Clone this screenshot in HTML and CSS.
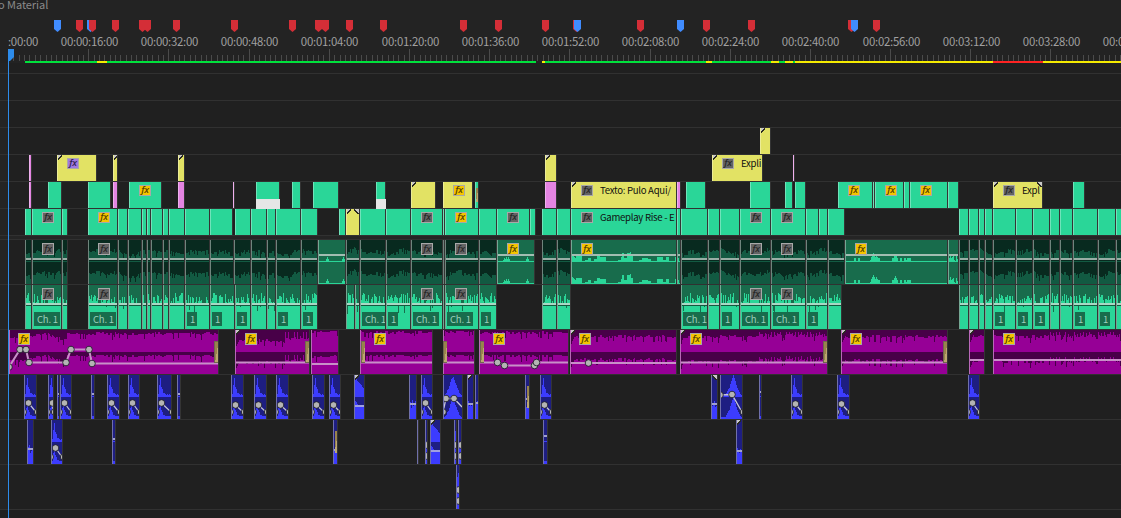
FILE: index.html
```
<!DOCTYPE html>
<html lang="en">
<head>
    <meta charset="UTF-8">
    <meta name="viewport" content="width=device-width, initial-scale=1.0">
    <title>Timeline</title>
    <link rel="stylesheet" href="styles.css">
</head>
<body>
    <div class="timeline">
        <header class="header">
            <div class="tab">o Material</div>
            <div class="markers" id="markers"></div>
            <div class="timecodes" id="timecodes"></div>
            <div class="ticks" id="ticks"></div>
            <div class="render-bar" id="renderBar"></div>
        </header>
        <main class="tracks">
            <div class="track top"></div>
            <div class="track video"></div>
            <div class="track video"></div>
            <div class="track video" id="v4"></div>
            <div class="track video" id="v3"></div>
            <div class="track video" id="v2"></div>
            <div class="track video" id="v1"></div>
            <div class="divider"></div>
            <div class="track audio" id="a1"></div>
            <div class="track audio" id="a2"></div>
            <div class="track audio" id="a3"></div>
            <div class="track audio" id="a4"></div>
            <div class="track audio" id="a5"></div>
            <div class="track audio" id="a6"></div>
        </main>
        <div class="playhead">
            <svg width="6" height="12"><path d="M0 0H6V8L2 12H0Z" fill="#2d8ceb"/></svg>
        </div>
    </div>
    <script src="timeline.js"></script>
</body>
</html>
```
FILE: styles.css
```
* {
    box-sizing: border-box;
    margin: 0;
    padding: 0;
}
body {
    width: 1121px;
    height: 518px;
    overflow: hidden;
    background-color: #202020;
    font-family: "Noto Sans CJK SC", "Noto Sans", sans-serif;
}
.timeline {
    position: relative;
    height: 518px;
    overflow: hidden;
}
.header {
    display: flex;
    flex-direction: column;
    height: 63px;
    background-color: #232323;
}
.tab {
    height: 20px;
    line-height: 9px;
    font-size: 11px;
    letter-spacing: -0.05px;
    color: #8a8a8a;
    white-space: nowrap;
    margin-left: -2px;
}
.markers {
    position: relative;
    height: 14px;
}
.marker {
    position: absolute;
    top: 0;
    width: 7px;
    height: 12px;
    clip-path: polygon(0 0, 100% 0, 100% 75%, 50% 100%, 0 75%);
}
.marker.red {
    background-color: #d42e37;
}
.marker.blue {
    background-color: #408cff;
}
.timecodes {
    position: relative;
    height: 15px;
}
.timecode {
    position: absolute;
    top: 0;
    width: 80px;
    text-align: center;
    font-size: 11.4px;
    line-height: 14px;
    letter-spacing: -0.25px;
    color: #a0a0a0;
}
.ticks {
    position: relative;
    height: 12px;
}
.tick {
    position: absolute;
    bottom: 0;
    width: 1px;
    height: 6px;
    background-color: #4b4b4b;
}
.tick.major {
    height: 12px;
}
.render-bar {
    position: relative;
    height: 2px;
}
.render {
    position: absolute;
    top: 0;
    height: 2px;
}
.render.green {
    background-color: #00e13c;
}
.render.yellow {
    background-color: #f5eb00;
}
.render.red {
    background-color: #ff2323;
}
.track {
    position: relative;
    border-bottom: 1px solid #313131;
    background: linear-gradient(90deg, #242424 8px, #202020 8px);
}
.track.top {
    height: 11px;
}
.track.video {
    height: 27px;
}
.track.audio {
    height: 45px;
}
.divider {
    height: 4px;
    background-color: #252525;
    border-bottom: 1px solid #313131;
}
.clip {
    position: absolute;
    top: 0;
    bottom: 0;
    overflow: hidden;
    border-left: 1px solid;
}
.edge {
    position: absolute;
    top: 0;
    bottom: 0;
    width: 1px;
    background-color: #343434;
}
.clip > svg {
    display: block;
    margin-left: -1px;
}
.clip.green {
    background-color: #2ad698;
    border-color: #70e3ba;
}
.clip.yellow {
    background-color: #e2e264;
    border-color: #ecec96;
}
.clip.pink {
    background-color: #e484e2;
    border-color: #efb0ee;
}
.clip.dark {
    background-color: #082a1f;
    border-color: #6f847c;
}
.clip.bright,
.clip.voice {
    background-color: #186c4c;
    border-color: #74a793;
}
.clip.purple {
    background-color: #480048;
    border-color: #b868b8;
}
.clip.blue {
    background-color: #1e1e82;
    border-color: #7070aa;
}
.cut-left::before,
.cut-right::after {
    content: "";
    position: absolute;
    top: 0;
    width: 5px;
    height: 5px;
}
.cut-left::before {
    left: -1px;
    background: linear-gradient(135deg, #c8c8c8 45%, #2a2a20 45%, #2a2a20 62%, transparent 62%);
}
.cut-right::after {
    right: 0;
    background: linear-gradient(225deg, #c8c8c8 45%, #2a2a20 45%, #2a2a20 62%, transparent 62%);
}
.fx {
    position: absolute;
    top: 3px;
    width: 12px;
    height: 11px;
    border: 1px solid #a8a8a8;
    background-color: #646464;
    color: #262626;
    font-family: "Noto Sans", sans-serif;
    font-style: italic;
    font-weight: 500;
    font-size: 9.5px;
    line-height: 8px;
    letter-spacing: -0.2px;
    text-align: center;
}
.fx.gold {
    background-color: #f5c400;
    color: #503c00;
}
.fx.violet {
    background-color: #a078e0;
    color: #2c1c50;
}
.audio .fx {
    height: 12px;
    line-height: 9px;
}
.name {
    position: absolute;
    top: 2px;
    font-size: 9.6px;
    line-height: 13px;
    letter-spacing: -0.28px;
    color: #101010;
    white-space: nowrap;
}
.channel {
    position: absolute;
    left: 1px;
    top: 27px;
    height: 14px;
    padding: 0 2px 0 3px;
    background-color: #186c4c;
    color: #9fd0bd;
    font-size: 9.5px;
    line-height: 14px;
    letter-spacing: -0.2px;
    white-space: nowrap;
}
.under {
    position: absolute;
    top: 17px;
    height: 10px;
    background-color: #e6e6e6;
}
.transition {
    position: absolute;
    top: 11px;
    width: 4px;
    height: 22px;
    border: 1px solid #706850;
    border-right-width: 0;
    background: linear-gradient(100deg, #98844c 55%, #bca870 55%);
}
.transition.thin {
    width: 2px;
    border-width: 0;
}
.playhead {
    position: absolute;
    left: 8px;
    top: 49px;
    bottom: 0;
    border-left: 1px solid #2d8ceb;
}
.playhead svg {
    display: block;
    margin-left: -1px;
}
```
FILE: timeline.js
```
const $ = id => document.getElementById(id);
const END = 1122;

function add(parent, cls, left, width, html) {
    const el = document.createElement('div');
    el.className = cls;
    if (left !== null) el.style.left = left + 'px';
    if (width) el.style.width = width + 'px';
    el.innerHTML = html || '';
    parent.appendChild(el);
    return el;
}

// small seeded noise, so the waveforms stay the same on every load
function noise(n) {
    const v = Math.sin(n * 127.1 + 11.7) * 43758.5453;
    return v - Math.floor(v);
}

function wave(x0, w, base, level, color) {
    let d = `M0 ${base}`;
    for (let i = 0; i < w; i++) {
        d += `V${base - Math.max(0, Math.round(level(i, x0 + i)))}H${i + 1}`;
    }
    return `<path d="${d}V${base}Z" fill="${color}" shape-rendering="crispEdges"/>`;
}

function bar(y, w, h, color) {
    return `<rect x="0" y="${y}" width="${w}" height="${h}" fill="${color}"/>`;
}

function svg(w, inner) {
    return `<svg width="${w}" height="44">${inner}</svg>`;
}

function dot(x, y) {
    return `<circle cx="${x}" cy="${y}" r="3.3" fill="#b4b4b4" stroke="#141420" stroke-width="0.8"/>`;
}

function clip(track, type, from, to, opts = {}) {
    let cls = 'clip ' + type;
    if (opts.cut) cls += ' cut-left';
    if (opts.cutEnd) cls += ' cut-right';
    const el = add(track, cls, from, to - from, opts.html);
    add(track, 'edge', to);
    if (opts.fx) add(el, 'fx ' + opts.fx, (opts.fxAt || 10) - 1, 0, 'fx');
    if (opts.name) add(el, 'name', (opts.nameAt || 29) - 1, 0, opts.name);
    if (opts.channel) add(el, 'channel', null, 0, opts.channel);
    return el;
}

// [[start, start, ..., end], ...] -> pairs
function spans(groups) {
    const out = [];
    groups.forEach(g => {
        for (let i = 0; i < g.length - 1; i++) {
            out.push([g[i], i === g.length - 2 ? g[i + 1] : g[i + 1] - 1]);
        }
    });
    return out;
}

// ---- header ----
[[54, 'blue'], [76, 'red'], [87, 'blue'], [89, 'red'], [112, 'red'], [139, 'red'], [144, 'red'],
 [173, 'red'], [231, 'red'], [289, 'red'], [315, 'red'], [322, 'red'], [346, 'red'], [380, 'red'],
 [460, 'red'], [495, 'red'], [542, 'red'], [573, 'red'], [574, 'blue'], [637, 'red'], [677, 'blue'],
 [703, 'red'], [748, 'red'], [848, 'red'], [851, 'blue'], [873, 'red']
].forEach(m => add($('markers'), 'marker ' + m[1], m[0]));

const pad = n => String(n).padStart(2, '0');
for (let i = 0; i < 15; i++) {
    const s = i * 16;
    const label = i === 0 ? ':00:00' : `00:${pad(Math.floor(s / 60))}:${pad(s % 60)}:00`;
    const x = 8.6 + i * 80.18;
    add($('timecodes'), 'timecode', i === 0 ? -17 : Math.round(x) - 39.5, 0, label);
    for (let j = 0; j < 15; j++) {
        add($('ticks'), 'tick' + (j ? '' : ' major'), Math.floor(x + j * 5.345));
    }
}

[[25, 536, 'green'], [97, 107, 'yellow'], [542, 545, 'yellow'], [545, 706, 'green'],
 [706, 712, 'yellow'], [712, 771, 'green'], [771, 779, 'yellow'], [779, 785, 'green'],
 [785, 793, 'yellow'], [793, 795, 'green'], [795, 993, 'yellow'], [993, 1043, 'red'],
 [1043, END, 'yellow']
].forEach(r => add($('renderBar'), 'render ' + r[2], r[0], r[1] - r[0]));

// ---- video tracks ----
clip($('v4'), 'yellow', 760, 770, { cut: 1 });

[['pink', 29, 31], ['yellow', 57, 96, { cut: 1, fx: 'violet' }], ['yellow', 113, 117, { cut: 1 }],
 ['yellow', 178, 184, { cut: 1 }], ['yellow', 545, 556, { cut: 1 }],
 ['yellow', 712, 762, { cut: 1, fx: 'gray', name: 'Expli' }], ['pink', 793, 794]
].forEach(c => clip($('v3'), ...c));

[['pink', 29, 31], ['green', 48, 61], ['green', 88, 110], ['pink', 113, 117],
 ['green', 129, 161, { fx: 'gold' }], ['pink', 178, 184], ['pink', 233, 234], ['green', 256, 279],
 ['green', 292, 300], ['green', 313, 338], ['green', 376, 385], ['yellow', 411, 435, { cut: 1 }],
 ['yellow', 443, 472, { fx: 'gold' }], ['green', 475, 478], ['pink', 545, 556],
 ['yellow', 571, 676, { cut: 1, fx: 'gray', name: 'Texto: Pulo Aqui/' }], ['pink', 677, 680],
 ['green', 686, 705], ['green', 750, 770], ['green', 785, 792], ['green', 795, 805],
 ['green', 838, 872, { fx: 'gold' }], ['green', 873, 874], ['green', 875, 903, { fx: 'gold' }],
 ['green', 904, 909], ['green', 910, 947, { fx: 'gold' }], ['green', 948, 958],
 ['yellow', 993, 1042, { cut: 1, cutEnd: 1, fx: 'gray', name: 'Expl' }], ['green', 1073, 1084]
].forEach(c => clip($('v2'), ...c));
add($('v2'), 'under', 256, 24);
add($('v2'), 'under', 376, 10);
const small = add($('v2'), 'transition thin', 476, 2);
small.style.top = '6px';
small.style.height = '14px';

const fxV1 = { 32: 'gray', 88: 'gold', 411: 'gray', 445: 'gold', 497: 'gray', 571: 'gray', 740: 'gray', 771: 'gray' };
const tail = [959, 969, 979, 985, 993, 1016, 1033, 1050, 1060, 1073, 1098, 1116, END];
spans([
    [25, 32, 62, 67], [88, 118, 128, 142, 147, 151, 163, 169, 185, 210, 232],
    [235, 251, 267, 276, 301, 317], [339, 345], [360, 386, 411, 443, 445, 479, 497, 530, 535],
    [542, 557, 571, 677, 681, 708, 720, 740, 771, 806, 819, 828, 844], tail
]).forEach(([a, b]) => clip($('v1'), 'green', a, b, {
    fx: fxV1[a],
    name: a === 571 ? 'Gameplay Rise - E' : ''
}));
clip($('v1'), 'yellow', 346, 359, { cut: 1, cutEnd: 1 });

// ---- A1: muted game sound, with a few louder parts ----
const head = [88, 118, 128, 142, 147, 151, 163, 169, 185, 210, 234, 251, 267, 276, 301, 317];
spans([
    [25, 32, 62, 67], head, [346, 359], [360, 386, 411, 443, 445, 479, 496], [542, 557, 570],
    [681, 708, 720, 740, 771, 806, 828, 844], tail
]).forEach(([a, b]) => {
    const w = b - a;
    const lvl = (i, x) => 8 + 3 * Math.sin(x / 5.5) * Math.sin(x / 17) + noise(Math.floor(x / 2)) * 4 - (noise(x) < 0.15 ? 4 : 0);
    clip($('a1'), 'dark', a, b, {
        fx: [32, 88, 411, 445, 740, 771].includes(a) ? 'gray' : '',
        html: svg(w, wave(a, w, 18, (i, x) => lvl(i, x) - 4, '#125a42') + wave(a, w, 44, lvl, '#125a42') +
            bar(18, w, 2, '#98aea5') + bar(21, w, 1, '#125a42'))
    });
});

const peaks = {
    318: [[9, 5], [25, 5]],
    497: [[7, 4], [9, 5], [11, 5], [30, 5]],
    845: [[28, 9], [31, 7], [50, 8], [48, 4], [62, 4]]
};
[[318, 345], [497, 534], [571, 676], [677, 680], [845, 947], [948, 958]].forEach(([a, b]) => {
    const w = b - a;
    const lvl = (i, x) => {
        if (a === 571) return i < 5 ? 8 - i : noise(Math.floor(x / 3)) * 7 - 1 + (i > 50 && i < 60 ? 4 : 0);
        if (!peaks[a]) return noise(x) * 9 - 1;
        let h = 1;
        peaks[a].forEach(p => { h = Math.max(h, p[1] - Math.abs(i - p[0]) * 2.2); });
        return a === 845 && i < 66 && noise(Math.floor(x / 2)) > 0.65 ? Math.max(h, 4) : h;
    };
    clip($('a1'), 'bright', a, b, {
        fx: [497, 571, 845].includes(a) ? 'gold' : '',
        html: svg(w, wave(a, w, 22, lvl, '#2ad698') + wave(a, w, 44, lvl, '#2ad698') +
            bar(21, w, 1, '#2ad698') + bar(43, w, 1, '#2ad698') + bar(14, w, 2, '#a2bdb2'))
    });
});

// ---- A2: voice ----
const wide = [32, 88, 360, 411, 445, 681, 740, 771];
const narrow = [185, 210, 235, 276, 301, 386, 479, 720, 806, 993, 1016, 1033, 1073, 1098];
spans([
    [25, 32, 62, 67], [88, 118, 128, 142, 147, 151, 163, 169, 185, 210, 235, 251, 267, 276, 301, 317],
    [346, 355, 360, 386, 411, 443, 445, 479, 496], [542, 557, 570],
    [681, 708, 720, 740, 771, 806, 828, 841], tail
]).forEach(([a, b]) => {
    const w = b - a;
    const lvl = (i, x) => {
        const n = noise(x);
        if (n < 0.08) return 14 + noise(x + 0.5) * 10;
        if (n < 0.3) return 26;
        return 27 + noise(x * 1.7) * 9;
    };
    clip($('a2'), 'voice', a, b, {
        fx: [32, 88, 411, 445, 740, 771].includes(a) ? 'gray' : '',
        channel: wide.includes(a) ? 'Ch. 1' : narrow.includes(a) ? '1' : '',
        html: svg(w, wave(a, w, 44, lvl, '#2ad698') + bar(18, w, 2, '#a9d8c5') + bar(20, w, 1, '#14583e'))
    });
});

// ---- A3: music. loud = fill of the upper channel, low = of the lower one ----
[
    { a: 9, b: 218, loud: 17, low: 17, fx: 1, at: 9, line: [[0, 37], [11, 19.5], [17, 19.5], [20, 32.5], [57, 32.5], [62, 19.5], [80, 19.5], [83, 33.5], [209, 33.5]], dots: 8 },
    { a: 235, b: 309, loud: 10, low: 10, fx: 1, cut: 1 },
    { a: 311, b: 338, loud: 19, low: 16, y: 34 },
    { a: 360, b: 432, loud: 18, low: 17, fx: 1, at: 14 },
    { a: 443, b: 474, loud: 19, low: 17 },
    { a: 479, b: 568, loud: 18, low: 17, fx: 1, at: 14, line: [[0, 32.5], [18.5, 32.5], [25.5, 35.5], [55.5, 35.5], [57.5, 32.5], [89, 32.5]], dots: 5 },
    { a: 570, b: 676, loud: 14, low: 13, fx: 1, cut: 1, at: 9, line: [[0, 33], [18.5, 33], [106, 33]], dots: 2 },
    { a: 680, b: 827, loud: 14, low: 11, fx: 1, cut: 1 },
    { a: 841, b: 947, loud: 14, low: 12, fx: 1, cut: 1, at: 9 },
    { a: 969, b: 984, loud: 14, low: 11, y: 30, cut: 1 },
    { a: 993, b: END, loud: 14, low: 11, y: 30, fx: 1 }
].forEach(c => {
    const w = c.b - c.a;
    const lvl = amount => (i, x) => {
        let h = amount + noise(Math.floor(x / 2)) * 3 - (noise(x * 3) < 0.12 ? 5 : 0);
        if (c.a === 9 && i < 58) h -= 3 + 3 * Math.sin(i / 7);
        if (c.cut && i < 4) h -= 8 - i * 2;
        if ((c.a === 680 && i > 78) || (c.a === 993 && i > 54)) h += x % 3 ? 1 : 4;
        if (c.a === 235 && i > 48) h += x % 3 ? 2 : 9;
        return Math.min(h, c.loud > 15 ? 21 : 20);
    };
    const pts = c.line || [[0, c.y || 32.5], [w, c.y || 32.5]];
    let html = wave(c.a, w, 22, lvl(c.loud), '#960096') + wave(c.a, w, 44, (i, x) => Math.min(lvl(c.low)(i, x), 19), '#960096') +
        `<polyline points="${pts.map(p => p.join()).join(' ')}" fill="none" stroke="#c890c8" stroke-width="2"/>`;
    if (c.dots) html += pts.slice(c.dots === 8 ? 0 : 1, c.dots).map(p => dot(...p)).join('');
    clip($('a3'), 'purple', c.a, c.b, {
        cut: c.cut,
        fx: c.fx ? 'gold' : '',
        fxAt: c.at,
        html: svg(w, html)
    });
});
[214, 305, 361, 443, 480, 823, 943].forEach(x => add($('a3'), 'transition', x));

// ---- A4 - A6: sound effects ----
const HIT = [1, 3, 12, 19, 10, 8, 4, 4, 3, 2, 3, 2, 3, 2, 2];

function effect(track, a, b, kind, y = 28, opts = {}) {
    const w = b - a;
    const blue = '#3c3cff';
    let html = '';
    if (kind === 'hit') {
        const lvl = i => HIT[i] || 2;
        html = wave(a, w, 22, lvl, blue) + wave(a, w, 44, i => lvl(i) * 0.8 + 1, blue) +
            `<path d="M4.5 ${y}L${w} 37" fill="none" stroke="#c8c8d8" stroke-width="1.2"/>` +
            dot(-0.8, 37) + dot(w + 1.6, 37) + dot(4.5, y);
    } else if (kind === 'swell') {
        const lvl = i => {
            const d = Math.abs(i - w * 0.5 - (w > 20 ? 2 : 0));
            return Math.max(2, 20 - d * (d < 5 ? 2.8 : 1.6) + noise(i) * 2 - (d < 5 ? 0 : 6));
        };
        html = wave(a, w, 22, lvl, blue) + wave(a, w, 44, lvl, blue);
        if (w > 20) {
            html += `<path d="M0 20L12 19.5L${w} 37" fill="none" stroke="#c8c8d8" stroke-width="1.3"/>` +
                dot(0, 20) + dot(12, 19.5) + dot(w + 1.5, 37);
        } else {
            html += `<path d="M0 37L3 23.5H11L${w} 32" fill="none" stroke="#c8c8d8" stroke-width="1.3"/>` +
                dot(0, 37) + dot(3, 23.5) + dot(11, 23.5);
        }
    } else if (kind === 'fade') {
        html = wave(a, w, 22, i => 20 - i * 1.2, blue) + wave(a, w, 44, i => Math.max(12, 20 - i * 1.6), blue) + bar(30, w, 2, '#a0a0e0');
    } else if (kind === 'keys') {
        html = wave(a, w, 44, i => 14 + noise(i + a) * 26, blue) + dot(w - 0.5, 25) + dot(w - 0.5, 36);
    } else {
        html = wave(a, w, 44, i => (kind === 'mid' ? 10 + noise(i + a) * 9 : 3), blue) +
            bar(21, w, 1, kind === 'mid' ? '#1e1e82' : blue) + bar(y, w, 2, '#a0a0d0');
    }
    clip(track, 'blue', a, b, Object.assign({ html: svg(w, html) }, opts));
}

[[24, 36, 'hit'], [48, 53, 'hit'], [57, 59, 'low', 18], [60, 71, 'hit'], [91, 94, 'low', 18],
 [107, 119, 'hit'], [128, 139, 'hit'], [157, 171, 'hit'], [177, 180, 'low', 18],
 [231, 243, 'hit', 30], [254, 266, 'hit', 30], [276, 288, 'hit', 30], [312, 324, 'hit', 30],
 [329, 340, 'hit', 30], [354, 364, 'fade', 0, { cut: 1 }], [409, 416, 'mid', 28], [421, 432, 'hit'],
 [443, 462, 'swell'], [467, 473, 'mid', 28, { cut: 1 }], [475, 478, 'mid', 27], [525, 529, 'mid', 23],
 [540, 551, 'hit', 30], [711, 717, 'mid', 28, { cutEnd: 1 }], [720, 742, 'swell'],
 [759, 761, 'low', 16], [791, 802, 'hit', 29], [837, 849, 'hit', 29], [968, 979, 'hit']
].forEach(e => effect($('a4'), ...e));
add($('a4'), 'transition thin', 527);

[[27, 33, 'mid', 28], [51, 62, 'hit'], [112, 115, 'low', 18], [333, 337, 'mid', 29],
 [417, 418, 'low', 20], [425, 427, 'keys'], [430, 440, 'fade', 0, { cut: 1 }], [454, 456, 'keys'],
 [458, 461, 'keys'], [543, 547, 'low', 15], [736, 742, 'mid', 30, { cut: 1 }]
].forEach(e => effect($('a5'), ...e));
add($('a5'), 'transition thin', 335);

effect($('a6'), 456, 459, 'keys');
```
